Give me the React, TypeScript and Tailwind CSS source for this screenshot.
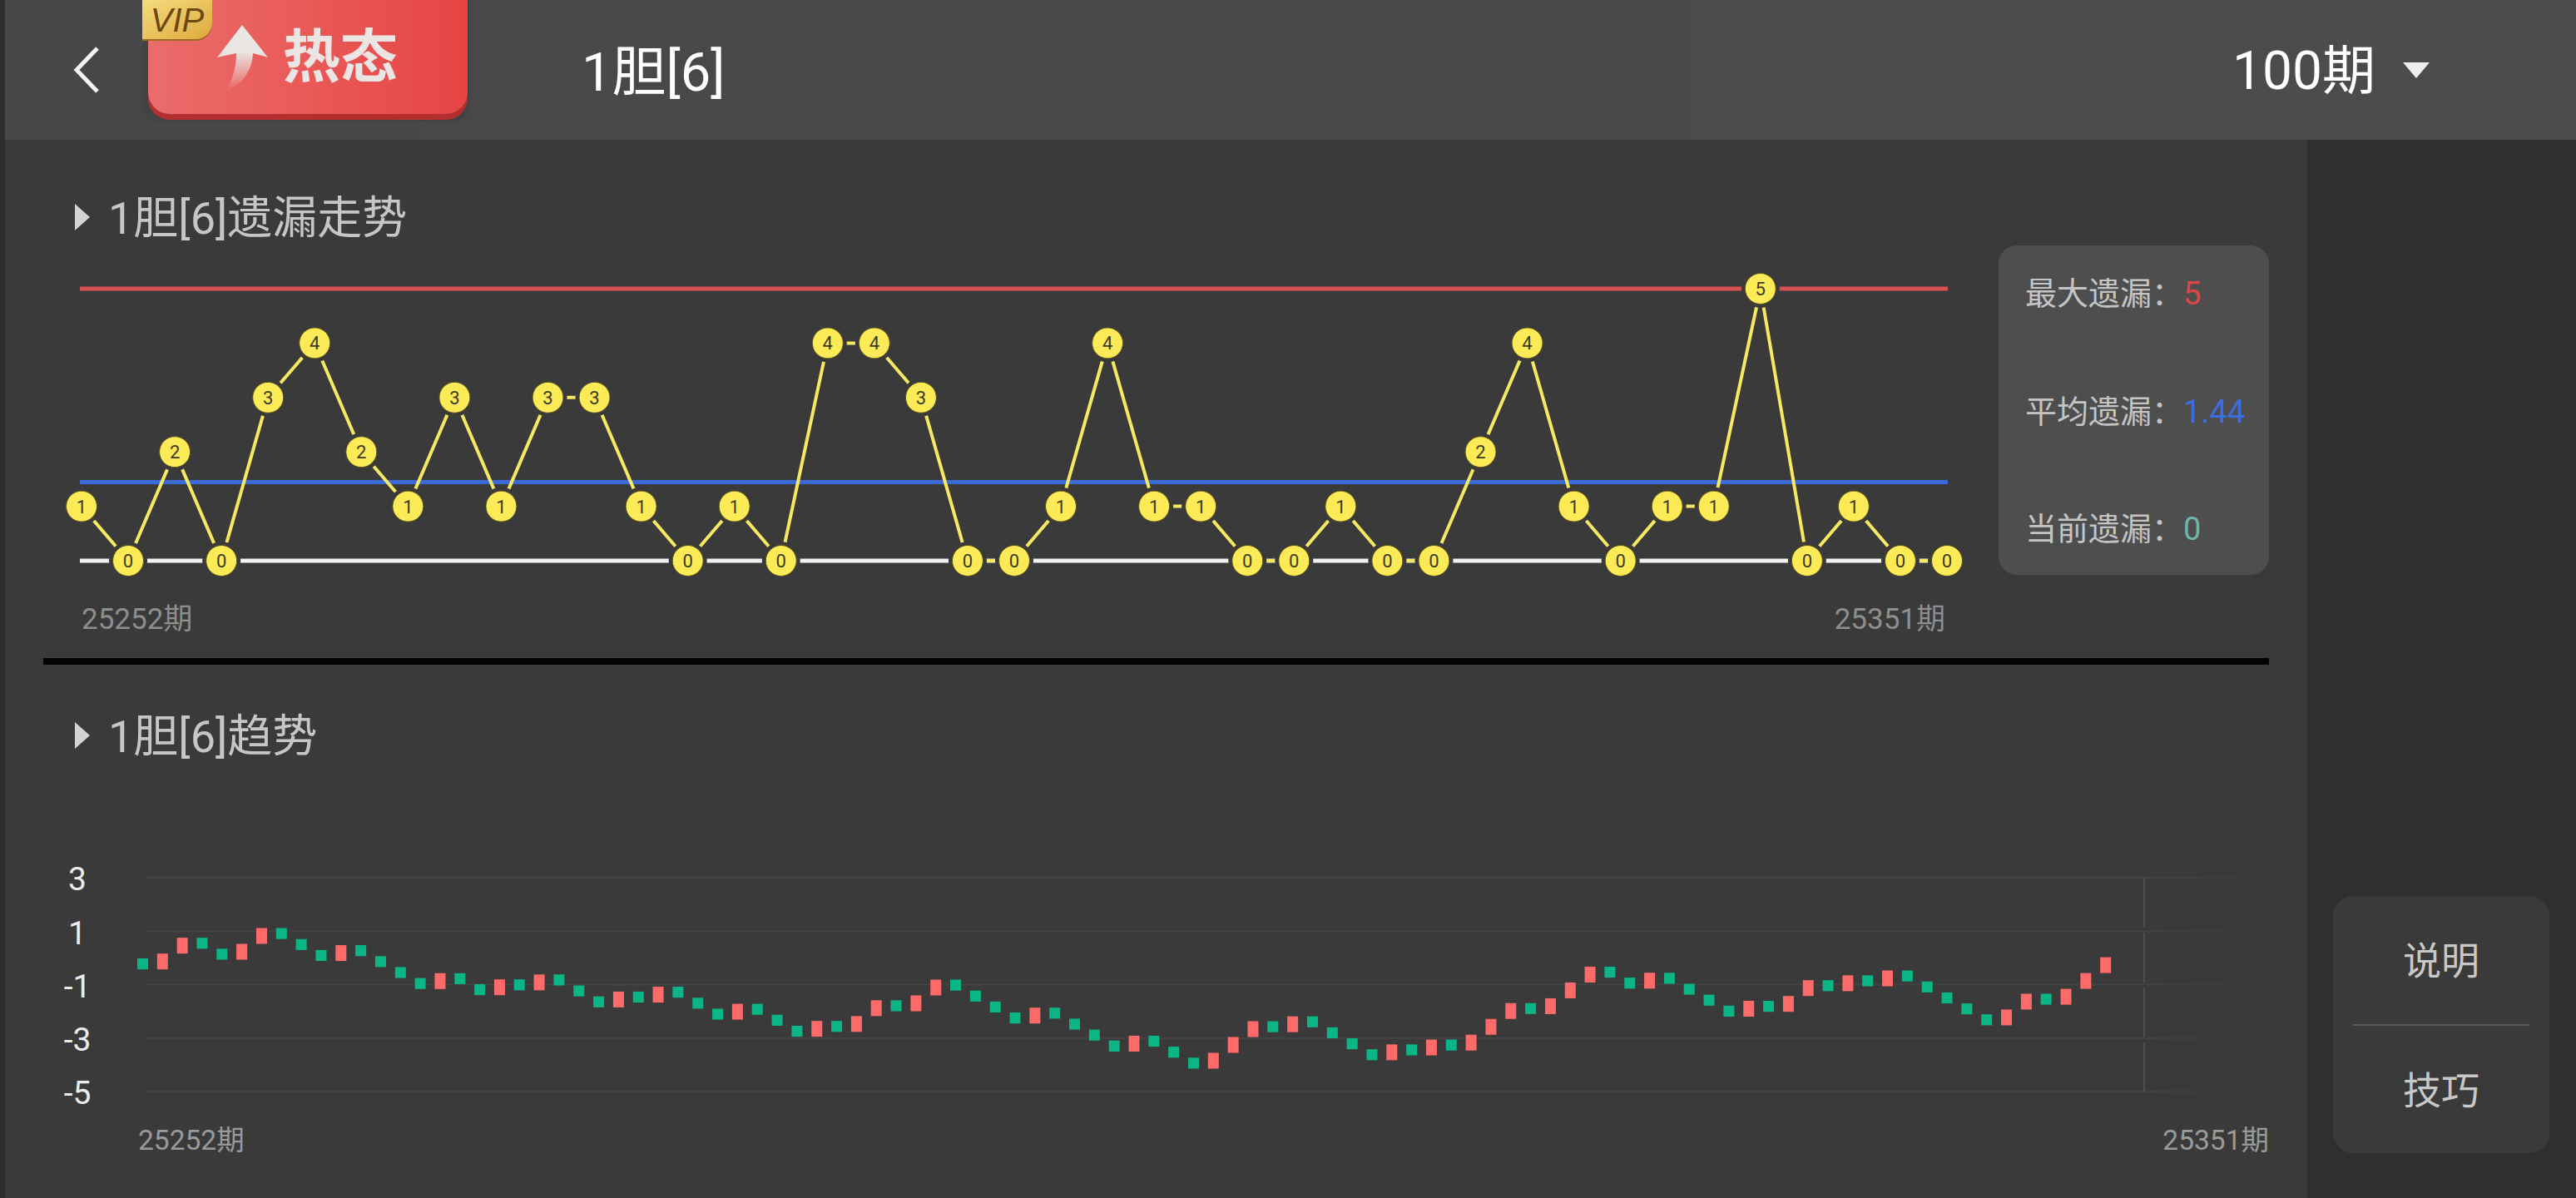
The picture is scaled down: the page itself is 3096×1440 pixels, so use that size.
const FONT = "font-['Roboto','Noto_Sans_CJK_SC',sans-serif]";

// misses per period, left to right
const misses = [1, 0, 2, 0, 3, 4, 2, 1, 3, 1, 3, 3, 1, 0, 1, 0, 4, 4, 3, 0, 0, 1, 4, 1, 1, 0, 0, 1, 0, 0, 2, 4, 1, 0, 1, 1, 5, 0, 1, 0, 0];
const trend =
  'GRRGGRRGGGRGGGGRGGRGRGGGRGRGGGRGGGRG' +
  'RRGRRGGGGRGGGGRGGGRRRGRGGGGRGRGRRRGRRRGGR' +
  'GGGGRGRRGRGRGGGGGRRGRRR';

const nodeX = (i: number) => 98 + i * 56.05;
const nodeY = (v: number) => 674 - v * 65.4;

function MissChart() {
  return (
    <svg viewBox="52 295 2349 396" className="w-[2349px] h-[396px] overflow-visible shrink-0">
      <line x1="96" x2="2341" y1="347" y2="347" stroke="#d85050" strokeWidth="5" />
      <line x1="96" x2="2341" y1="579.5" y2="579.5" stroke="#3a6bd8" strokeWidth="5" />
      <line x1="96" x2="2341" y1="674" y2="674" stroke="#f2f2f2" strokeWidth="5" />
      <polyline
        points={misses.map((v, i) => `${nodeX(i)},${nodeY(v)}`).join(' ')}
        fill="none"
        stroke="#f5e964"
        strokeWidth="4"
      />
      {misses.map((v, i) => (
        <circle key={i} cx={nodeX(i)} cy={nodeY(v)} r="23" fill="#3a3a3a" />
      ))}
      {misses.map((v, i) => (
        <g key={i}>
          <circle cx={nodeX(i)} cy={nodeY(v)} r="18.5" fill="#fdea57" stroke="#57511f" strokeWidth="1" />
          <text x={nodeX(i)} y={nodeY(v) + 8} textAnchor="middle" fontSize="22" fill="#3d3a22">
            {v}
          </text>
        </g>
      ))}
    </svg>
  );
}

function TrendChart() {
  let p = 1152;
  const bars = trend.split('').map((c, i) => {
    const next = c === 'R' ? p - 19 : p + 13.18;
    const bar = { x: 165 + i * 23.83, y: Math.min(p, next), h: Math.abs(next - p), c };
    p = next;
    return bar;
  });

  return (
    <svg viewBox="52 1030 2675 300" className="w-[2675px] h-[300px] overflow-visible">
      <defs>
        <linearGradient id="grid" x1="0" x2="1" y1="0" y2="0">
          <stop offset="0.94" stopColor="#434343" />
          <stop offset="1" stopColor="#3b3b3b" />
        </linearGradient>
      </defs>
      {[1055, 1119.5, 1183.5, 1248, 1312].map((y) => (
        <rect key={y} x="175" y={y - 1} width="2545" height="2" fill="url(#grid)" />
      ))}
      <line x1="2577" x2="2577" y1="1055" y2="1312" stroke="#4f4f4f" strokeWidth="2" strokeDasharray="60 6" />
      {[
        ['3', 1056],
        ['1', 1121],
        ['-1', 1185],
        ['-3', 1249],
        ['-5', 1313],
      ].map(([t, y]) => (
        <text key={t} x="93" y={Number(y) + 14} textAnchor="middle" fontSize="39" fill="#ececec">
          {t}
        </text>
      ))}
      {bars.map((b, i) => (
        <rect key={i} x={b.x} y={b.y} width="13" height={b.h} fill={b.c === 'R' ? '#fd6a6a' : '#0cb585'} />
      ))}
    </svg>
  );
}

function SectionTitle({ text }: { text: string }) {
  return (
    <div className="flex items-center h-[64px] ml-[38px]">
      <svg width="18" height="32" viewBox="0 0 18 32" className="shrink-0">
        <path d="M0 0L18 16L0 32Z" fill="#d4d4d4" />
      </svg>
      <span className="ml-[22px] mt-[3px] text-[54px] leading-[64px] text-[#c6c6c6]">{text}</span>
    </div>
  );
}

function Stat({ label, value, color }: { label: string; value: string; color: string }) {
  return (
    <div className="flex items-center h-[46px] text-[38px] leading-[46px] text-[#c4c4c4]">
      <span className="w-[190px] shrink-0 whitespace-nowrap">{label}：</span>
      <span className={color}>{value}</span>
    </div>
  );
}

export default function App() {
  return (
    <div className={`flex w-[3096px] h-[1440px] overflow-hidden bg-[#2e2e2e] ${FONT}`}>
      <div className="w-[6px] shrink-0" />
      <div className="flex flex-col flex-1 min-w-0">
        <header className="flex items-start h-[168px] shrink-0 bg-linear-to-r from-[#474747] to-[#4c4c4c]">
          <svg width="34" height="58" viewBox="0 0 34 58" className="ml-[81px] mt-[55px] shrink-0">
            <path d="M30 3L5 29L30 55" fill="none" stroke="#f4f4f4" strokeWidth="5" />
          </svg>
          <div className="relative ml-[50px] w-[393px] h-[146px] shrink-0 bg-[#434345] rounded-b-[20px]">
            <div className="ml-[7px] w-[384px] h-[137px] rounded-b-[26px] bg-linear-to-r from-[#ea6c6b] to-[#e64443] shadow-[0_7px_0_#b52e2f] flex items-start">
              <svg width="70" height="84" viewBox="0 0 70 84" className="ml-[80px] mt-[28px] shrink-0">
                <defs>
                  <linearGradient id="tail" x1="0" x2="0" y1="0" y2="1">
                    <stop offset="0.4" stopColor="#e9e6e4" />
                    <stop offset="1" stopColor="#e9e6e4" stopOpacity="0" />
                  </linearGradient>
                </defs>
                <path
                  d="M33 2L64 41L46 36C45 55 36 72 13 82C22 68 26 52 26 36L3 41Z"
                  fill="url(#tail)"
                />
              </svg>
              <span className="ml-[12px] mt-[32px] text-[69px] leading-[76px] font-bold text-[#ebe6e3]">
                热态
              </span>
            </div>
            <div className="absolute left-0 top-0 w-[84px] h-[47px] rounded-br-[20px] bg-linear-to-br from-[#f5dc7e] to-[#dda93a] shadow-[0_2px_0_#9c6a1e] flex items-center justify-center">
              <span className="font-['Liberation_Sans',sans-serif] italic text-[40px] leading-[44px] text-[#6d4612]">
                VIP
              </span>
            </div>
          </div>
          <div className="ml-[135px] mt-[51px] text-[65px] leading-[72px] text-white">1胆[6]</div>
          <div className="ml-auto mr-[176px] mt-[50px] flex items-center h-[72px]">
            <span className="text-[64px] leading-[72px] text-white">100期</span>
            <svg width="32" height="19" viewBox="0 0 32 19" className="ml-[33px] -mt-[4px]">
              <path d="M0 0H32L16 19Z" fill="#eeeeee" />
            </svg>
          </div>
        </header>

        <div className="flex flex-1 min-h-0">
          <main className="flex flex-col w-[2767px] shrink-0 px-[46px] pt-[61px] bg-[#3a3a3a]">
            <SectionTitle text="1胆[6]遗漏走势" />
            <div className="flex justify-between mt-[2px] h-[396px]">
              <MissChart />
              <div className="flex flex-col justify-between w-[325px] h-[396px] pl-[32px] pt-[35px] pb-[32px] rounded-[22px] bg-[#4e4e4e]">
                <Stat label="最大遗漏" value="5" color="text-[#e04545]" />
                <Stat label="平均遗漏" value="1.44" color="text-[#3a6fe0]" />
                <Stat label="当前遗漏" value="0" color="text-[#6fb5a8]" />
              </div>
            </div>
            <div className="flex justify-between ml-[46px] w-[2240px] mt-[32px] h-[44px] text-[35px] leading-[44px] text-[#8e8e8e]">
              <span>25252期</span>
              <span>25351期</span>
            </div>
            <div className="h-[8px] mt-[24px] bg-black shrink-0" />

            <div className="mt-[53px]">
              <SectionTitle text="1胆[6]趋势" />
            </div>
            <div className="mt-[114px] h-[300px]">
              <TrendChart />
            </div>
            <div className="flex justify-between pl-[114px] mt-[19px] h-[44px] text-[33.5px] leading-[44px] text-[#9a9a9a]">
              <span>25252期</span>
              <span>25351期</span>
            </div>
          </main>

          <aside className="flex flex-col justify-end flex-1 pl-[31px] pr-[32px] pb-[54px] bg-[#2f2f2f]">
            <div className="flex flex-col h-[309px] rounded-[24px] bg-[#3a3a3a] text-[46px] text-[#c8c8c8]">
              <button className="flex-1 flex items-center justify-center pt-[4px]">说明</button>
              <div className="h-[2px] mx-[24px] bg-[#5c5c5c]" />
              <button className="flex-1 flex items-center justify-center pt-[4px]">技巧</button>
            </div>
          </aside>
        </div>
      </div>
    </div>
  );
}
